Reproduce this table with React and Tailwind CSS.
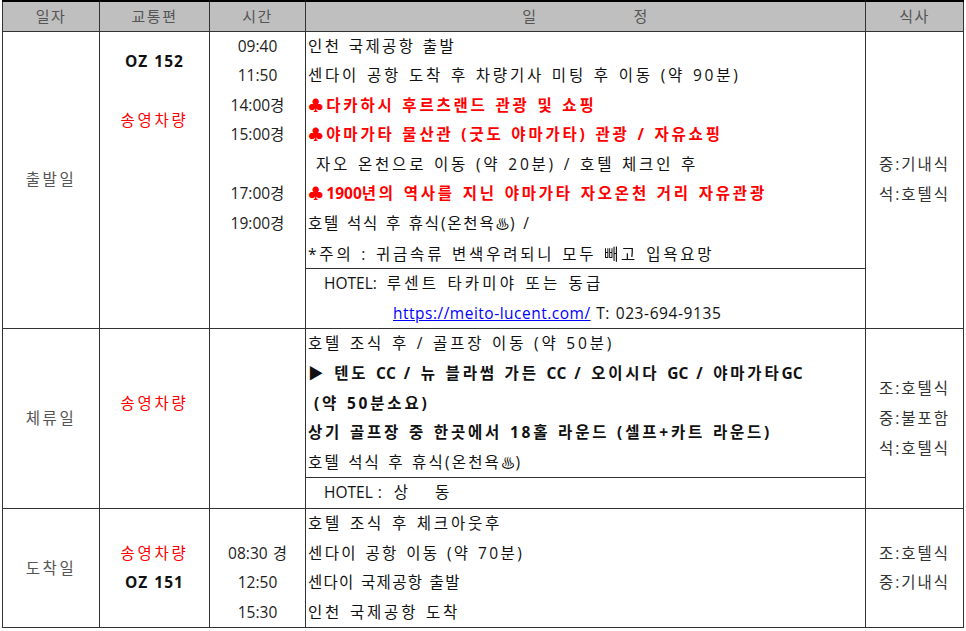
const rowLine = "h-[29.6px] leading-[29.6px] whitespace-pre";

function Line({ children, className = "" }) {
    return <div className={`${rowLine} ${className}`}>{children}</div>;
}

// latin runs keep their natural spacing
function Lat({ children, className = "" }) {
    return <span className={`tracking-normal ${className}`}>{children}</span>;
}

function Onsen() {
    return <span className="font-['Noto_Sans_CJK_KR',sans-serif] text-[14px] tracking-[0.5px] text-black">♨</span>;
}

const red = "text-[#ff0000] font-bold";
const cell = "border border-[#333]";

export default function App() {
    return (
        <div lang="ko" className="min-h-screen bg-white pl-[2px] font-['Open_Sans','Noto_Sans_CJK_KR',sans-serif] text-[15.5px] text-[#111] tracking-[2.8px] [word-spacing:1px]">
            <table className="w-[961px] table-fixed border-collapse border-t-2 border-t-black">
                <colgroup>
                    <col className="w-[97px]" />
                    <col className="w-[110px]" />
                    <col className="w-[96px]" />
                    <col className="w-[560px]" />
                    <col className="w-[98px]" />
                </colgroup>
                <thead>
                    <tr className="h-[30px] bg-[#bfbfbf] text-[15px] tracking-[1.5px] text-[#555]">
                        <th className={`${cell} font-normal`}>일자</th>
                        <th className={`${cell} font-normal`}>교통편</th>
                        <th className={`${cell} font-normal`}>시간</th>
                        <th className={`${cell} font-normal`}>
                            <div className="flex justify-center gap-[96px]">
                                <span>일</span>
                                <span>정</span>
                            </div>
                        </th>
                        <th className={`${cell} font-normal`}>식사</th>
                    </tr>
                </thead>
                <tbody>
                    {/* 출발일 */}
                    <tr>
                        <td className={`${cell} text-center align-middle tracking-[2.5px] text-[#555]`}>출발일</td>
                        <td className={`${cell} p-0 pt-[15px] text-center align-top`}>
                            <Line className="font-bold tracking-[1px]">OZ 152</Line>
                            <Line />
                            <Line className="text-[#ff0000]">송영차량</Line>
                        </td>
                        <td className={`${cell} p-0 text-center align-top tracking-normal text-[#222]`}>
                            <Line>09:40</Line>
                            <Line>11:50</Line>
                            <Line>14:00경</Line>
                            <Line>15:00경</Line>
                            <Line />
                            <Line>17:00경</Line>
                            <Line>19:00경</Line>
                        </td>
                        <td className={`${cell} p-0 align-top`}>
                            <div className="pl-[2px]">
                                <Line className="tracking-[2.4px]">인천 국제공항 출발</Line>
                                <Line>센다이 공항 도착 후 차량기사 미팅 후 이동 (약 90분)</Line>
                                <Line className={red}>♣다카하시 후르츠랜드 관광 및 쇼핑</Line>
                                <Line className={red}>♣야마가타 물산관 (굿도 야마가타) 관광 / 자유쇼핑</Line>
                                <Line className="pl-[8px]">자오 온천으로 이동 (약 20분) / 호텔 체크인 후</Line>
                                <Line className={red}>
                                    ♣<Lat>1900</Lat>년의 역사를 지닌 야마가타 자오온천 거리 자유관광
                                </Line>
                                <Line className="tracking-[1.8px]">
                                    호텔 석식 후 휴식(온천욕<Onsen />) /
                                </Line>
                                <Line>
                                    *주의 : 귀금속류 변색우려되니 모두{" "}
                                    <span className="inline-block font-['Noto_Sans_CJK_KR',sans-serif] [will-change:transform]">빼고</span> 입욕요망
                                </Line>
                            </div>
                            <div className="border-t border-[#333]">
                                <Line className="pl-[18px]">
                                    <Lat>HOTEL:</Lat>
                                    <span className="ml-[10px] tracking-[3.2px]">루센트 타카미야 또는 동급</span>
                                </Line>
                                <Line className="pl-[87px] tracking-normal">
                                    <span className="tracking-[0.5px] text-[#0000ff] underline">https://meito-lucent.com/</span>
                                    <span className="tracking-[0.6px]"> T: 023-694-9135</span>
                                </Line>
                            </div>
                        </td>
                        <td className={`${cell} text-center align-middle tracking-[2px] text-[#333]`}>
                            <Line>중:기내식</Line>
                            <Line>석:호텔식</Line>
                        </td>
                    </tr>

                    {/* 체류일 */}
                    <tr>
                        <td className={`${cell} text-center align-middle tracking-[2.5px] text-[#555]`}>체류일</td>
                        <td className={`${cell} p-0 text-center align-top`}>
                            <Line />
                            <Line />
                            <Line className="text-[#ff0000]">송영차량</Line>
                        </td>
                        <td className={`${cell} p-0`}></td>
                        <td className={`${cell} p-0 align-top`}>
                            <div className="pl-[2px]">
                                <Line>호텔 조식 후 / 골프장 이동 (약 50분)</Line>
                                <Line className="font-bold">
                                    ▶ 텐도 <Lat>CC</Lat> / 뉴 블라썸 가든 <Lat>CC</Lat> / 오이시다 <Lat>GC</Lat> / 야마가타<Lat>GC</Lat>
                                </Line>
                                <Line className="pl-[6px] font-bold">(약 50분소요)</Line>
                                <Line className="font-bold">상기 골프장 중 한곳에서 18홀 라운드 (셀프+카트 라운드)</Line>
                                <Line className="tracking-[2.2px]">
                                    호텔 석식 후 휴식(온천욕<Onsen />)
                                </Line>
                            </div>
                            <div className="border-t border-[#333]">
                                <Line className="pl-[18px]">
                                    <Lat>HOTEL :</Lat>
                                    <span className="ml-[12px]">상</span>
                                    <span className="ml-[24px]">동</span>
                                </Line>
                            </div>
                        </td>
                        <td className={`${cell} text-center align-middle tracking-[2px] text-[#333]`}>
                            <Line>조:호텔식</Line>
                            <Line>중:불포함</Line>
                            <Line>석:호텔식</Line>
                        </td>
                    </tr>

                    {/* 도착일 */}
                    <tr>
                        <td className={`${cell} text-center align-middle tracking-[2.5px] text-[#555]`}>도착일</td>
                        <td className={`${cell} p-0 text-center align-top`}>
                            <Line />
                            <Line className="text-[#ff0000]">송영차량</Line>
                            <Line className="font-bold tracking-[1px]">OZ 151</Line>
                        </td>
                        <td className={`${cell} p-0 text-center align-top tracking-normal text-[#222]`}>
                            <Line />
                            <Line>08:30 경</Line>
                            <Line>12:50</Line>
                            <Line>15:30</Line>
                        </td>
                        <td className={`${cell} p-0 align-top`}>
                            <div className="pl-[2px]">
                                <Line>호텔 조식 후 체크아웃후</Line>
                                <Line className="tracking-[2.4px]">센다이 공항 이동 (약 70분)</Line>
                                <Line className="tracking-[1.3px]">센다이 국제공항 출발</Line>
                                <Line>인천 국제공항 도착</Line>
                            </div>
                        </td>
                        <td className={`${cell} text-center align-middle tracking-[2px] text-[#333]`}>
                            <Line>조:호텔식</Line>
                            <Line>중:기내식</Line>
                        </td>
                    </tr>
                </tbody>
            </table>
        </div>
    );
}
